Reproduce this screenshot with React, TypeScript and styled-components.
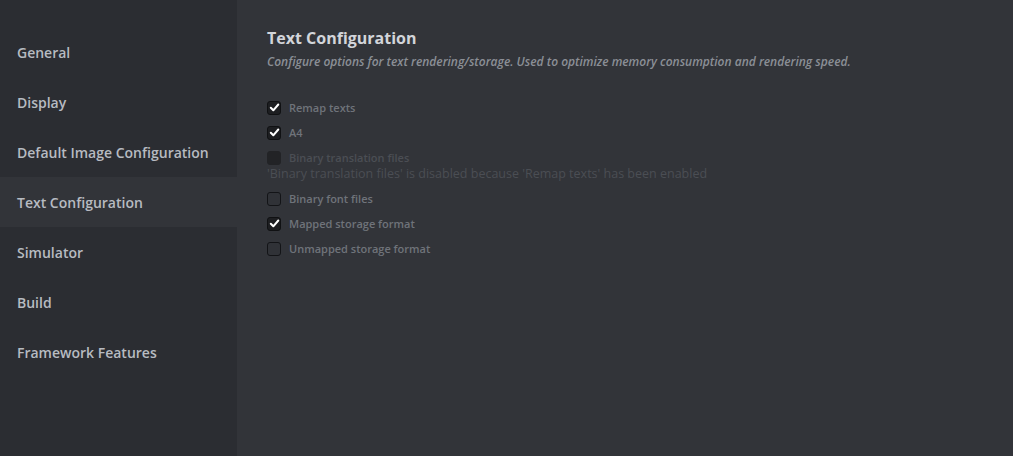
import React from "react";
import styled, { createGlobalStyle } from "styled-components";

const Global = createGlobalStyle`
  html, body { margin: 0; padding: 0; height: 100%; background: #323439; }
  #root { height: 100%; }
  * { box-sizing: border-box; }
`;

const Page = styled.div`
  display: flex;
  width: 100%;
  height: 456px;
  font-family: "Open Sans", "Noto Sans", sans-serif;
  background: #323439;
  overflow: hidden;
`;

const Sidebar = styled.nav`
  width: 237px;
  flex: none;
  background: #2b2d32;
  padding-top: 27px;
  display: flex;
  flex-direction: column;
`;

const NavItem = styled.div<{ $active?: boolean }>`
  height: 50px;
  display: flex;
  align-items: center;
  padding-left: 17px;
  font-size: 14px;
  font-weight: 600;
  color: #b7bbc1;
  background: ${(p) => (p.$active ? "#323439" : "transparent")};
`;

const Main = styled.main`
  flex: 1;
  padding: 26px 0 0 30px;
  display: flex;
  flex-direction: column;
`;

const Title = styled.h1`
  margin: 0;
  font-size: 16px;
  font-weight: 700;
  color: #d2d5da;
  line-height: 24px;
`;

const Subtitle = styled.p`
  margin: 0;
  font-size: 12px;
  font-style: italic;
  font-weight: 600;
  color: #8b8f96;
  line-height: 24px;
`;

const Options = styled.div`
  margin-top: 21px;
  display: flex;
  flex-direction: column;
`;

const Row = styled.label<{ $disabled?: boolean }>`
  height: 25px;
  display: flex;
  align-items: center;
  gap: 8px;
  font-size: 11px;
  font-weight: 600;
  color: ${(p) => (p.$disabled ? "#4b4e54" : "#6f737a")};
`;

const Box = styled.span<{ $checked?: boolean; $disabled?: boolean }>`
  width: 14px;
  height: 14px;
  flex: none;
  border-radius: 3px;
  border: 1px solid
    ${(p) => (p.$disabled ? "#222326" : p.$checked ? "#101113" : "#131417")};
  background: ${(p) =>
    p.$disabled ? "#222326" : p.$checked ? "#1d1e21" : "#303237"};
  display: flex;
  align-items: center;
  justify-content: center;
`;

const Note = styled.div`
  font-size: 12.5px;
  color: #4b4e54;
  line-height: 16px;
  margin-top: -4px;
  margin-bottom: 4px;
`;

const Check = () => (
  <svg width="11" height="11" viewBox="0 0 11 11">
    <path
      d="M1.8 5.8 L4.3 8.3 L9.3 2.5"
      fill="none"
      stroke="#ffffff"
      strokeWidth="2"
      strokeLinecap="round"
      strokeLinejoin="round"
    />
  </svg>
);

const Option = ({
  label,
  checked,
  disabled,
}: {
  label: string;
  checked?: boolean;
  disabled?: boolean;
}) => (
  <Row $disabled={disabled}>
    <Box $checked={checked} $disabled={disabled}>
      {checked && <Check />}
    </Box>
    {label}
  </Row>
);

const nav = [
  "General",
  "Display",
  "Default Image Configuration",
  "Text Configuration",
  "Simulator",
  "Build",
  "Framework Features",
];

export default function App() {
  return (
    <>
      <Global />
      <Page>
        <Sidebar>
          {nav.map((n) => (
            <NavItem key={n} $active={n === "Text Configuration"}>
              {n}
            </NavItem>
          ))}
        </Sidebar>
        <Main>
          <Title>Text Configuration</Title>
          <Subtitle>
            Configure options for text rendering/storage. Used to optimize memory consumption and
            rendering speed.
          </Subtitle>
          <Options>
            <Option label="Remap texts" checked />
            <Option label="A4" checked />
            <Option label="Binary translation files" disabled />
            <Note>'Binary translation files' is disabled because 'Remap texts' has been enabled</Note>
            <Option label="Binary font files" />
            <Option label="Mapped storage format" checked />
            <Option label="Unmapped storage format" />
          </Options>
        </Main>
      </Page>
    </>
  );
}
